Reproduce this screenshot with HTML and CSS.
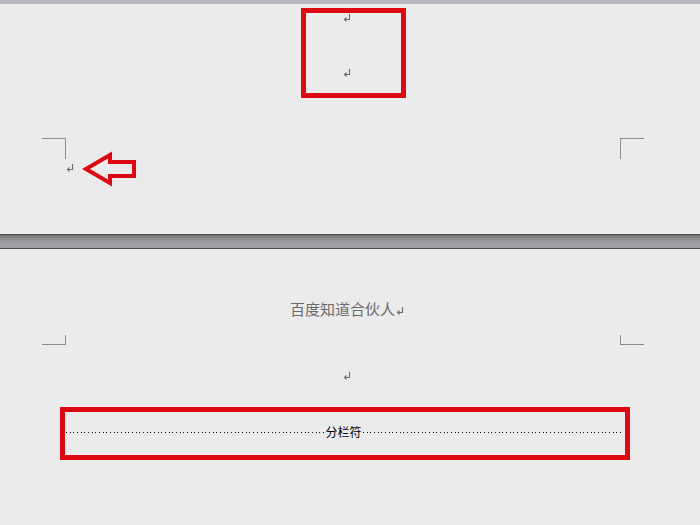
FILE: index.html
```html
<!DOCTYPE html>
<html lang="zh-CN">
<head>
    <meta charset="UTF-8">
    <meta name="viewport" content="width=device-width, initial-scale=1.0">
    <title>分栏符</title>
    <link rel="stylesheet" href="styles.css">
</head>
<body>
    <div class="topbar"></div>

    <div class="page page-end">
        <div class="line line-first">
            <svg class="ret" viewBox="0 0 8 8"><path d="M6.5 0V5.5H1.5M3.5 3.5L1.5 5.5L3.5 7.5"/></svg>
        </div>
        <div class="line line-second">
            <svg class="ret" viewBox="0 0 8 8"><path d="M6.5 0V5.5H1.5M3.5 3.5L1.5 5.5L3.5 7.5"/></svg>
        </div>
        <div class="corners corners-top">
            <span class="corner tl"></span>
            <span class="corner tr"></span>
        </div>
        <div class="line line-body">
            <svg class="ret" viewBox="0 0 8 8"><path d="M6.5 0V5.5H1.5M3.5 3.5L1.5 5.5L3.5 7.5"/></svg>
        </div>

        <div class="highlight box-header"></div>
        <svg class="arrow" viewBox="0 0 64 40">
            <polygon points="10,19 34,5 34,12 58,12 58,26 34,26 34,33"/>
        </svg>
    </div>

    <div class="gap"></div>

    <div class="page page-start">
        <div class="line header-text">
            <span>百度知道合伙人</span>
            <svg class="ret" viewBox="0 0 8 8"><path d="M6.5 0V5.5H1.5M3.5 3.5L1.5 5.5L3.5 7.5"/></svg>
        </div>
        <div class="corners corners-bottom">
            <span class="corner bl"></span>
            <span class="corner br"></span>
        </div>
        <div class="line line-empty">
            <svg class="ret" viewBox="0 0 8 8"><path d="M6.5 0V5.5H1.5M3.5 3.5L1.5 5.5L3.5 7.5"/></svg>
        </div>
        <div class="line column-break">
            <span class="dots"></span>
            <span class="label">分栏符</span>
            <span class="dots"></span>
        </div>

        <div class="highlight box-break"></div>
    </div>
</body>
</html>
```

FILE: styles.css
```css
body{
    margin: 0;
    background: #ebebeb;
    font-family: "Noto Sans CJK SC", "Noto Sans", sans-serif;
    overflow: hidden;
}

.topbar{
    height: 4px;
    background: #b8bac2;
}

.page{
    position: relative;
    display: flow-root;
    padding: 0 56px 0 42px;
}

.page-end{
    height: 230px;
}

.page-start{
    height: 276px;
}

.gap{
    height: 13px;
    border-top: 1px solid #4c4c4c;
    border-bottom: 1px solid #4f4f4f;
    background: linear-gradient(#727272, #929397 35%, #a2a3a9 70%, #9c9da3);
}

.line{
    display: flex;
    align-items: center;
    margin: 0 24px;
}

.ret{
    display: block;
    width: 8px;
    height: 8px;
    fill: none;
    stroke: #6c6c6c;
    stroke-width: 1.1;
}

.line-first{
    padding-top: 10px;
    padding-left: 277px;
}

.line-second{
    margin-top: 47px;
    padding-left: 277px;
}

.line-body{
    margin-top: 5px;
}

.corners{
    display: flex;
    justify-content: space-between;
}

.corners-top{
    margin-top: 61px;
}

.corners-bottom{
    margin-top: 18px;
}

.corner{
    display: block;
    width: 23px;
    border-color: #8c8c8c;
    border-style: solid;
    border-width: 0;
}

.tl{
    height: 20px;
    border-top-width: 1px;
    border-right-width: 1px;
}

.tr{
    height: 20px;
    border-top-width: 1px;
    border-left-width: 1px;
}

.bl{
    height: 9px;
    border-bottom-width: 1px;
    border-right-width: 1px;
}

.br{
    height: 9px;
    border-bottom-width: 1px;
    border-left-width: 1px;
}

.header-text{
    margin-top: 52px;
    padding-left: 224px;
    gap: 1px;
    height: 16px;
    font-size: 15px;
    line-height: 16px;
    color: #6a6a6a;
}

.header-text .ret{
    margin-top: 3px;
}

.line-empty{
    margin-top: 27px;
    padding-left: 277px;
}

.column-break{
    margin-top: 45px;
    height: 14px;
    margin-right: 23px;
}

.dots{
    flex: 1;
    height: 1px;
    margin-top: 1px;
    background-image: repeating-linear-gradient(to right, #111 0 1px, transparent 1px 3.67px);
}

.label{
    padding: 0 1px;
    font-size: 12px;
    line-height: 14px;
    color: #000;
}

.highlight{
    position: absolute;
    border: 5px solid #dc0812;
}

.box-header{
    left: 301px;
    top: 4px;
    width: 95px;
    height: 80px;
}

.box-break{
    left: 60px;
    top: 158px;
    width: 560px;
    height: 43px;
}

.arrow{
    position: absolute;
    left: 76px;
    top: 146px;
    width: 64px;
    height: 40px;
    fill: none;
    stroke: #dc0812;
    stroke-width: 4;
}
```
